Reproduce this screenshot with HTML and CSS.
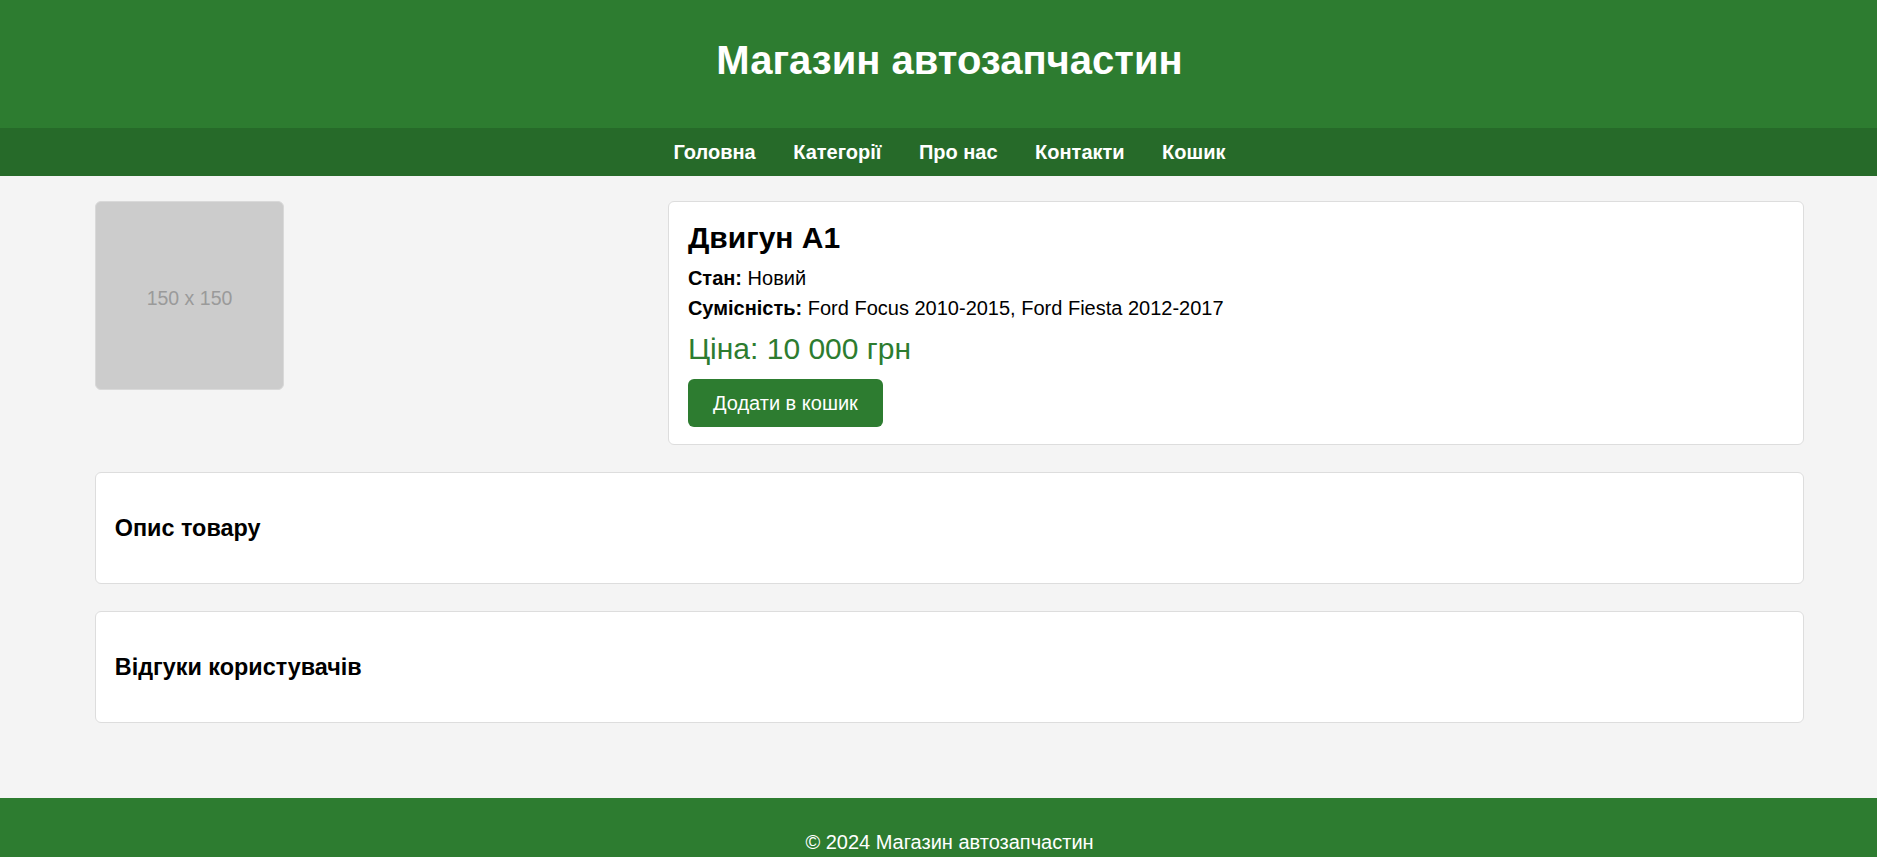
FILE: index.html
```html
<!DOCTYPE html>
<html lang="uk">
<head>
<meta charset="utf-8">
<title>Магазин автозапчастин</title>
<link rel="stylesheet" href="styles.css">
</head>
<body>
<header class="site-header">
  <h1 class="site-title">Магазин автозапчастин</h1>
</header>
<nav class="site-nav">
  <a href="#" class="nav-link">Головна</a>
  <a href="#" class="nav-link">Категорії</a>
  <a href="#" class="nav-link">Про нас</a>
  <a href="#" class="nav-link">Контакти</a>
  <a href="#" class="nav-link">Кошик</a>
</nav>
<main class="page">
  <section class="product">
    <div class="product-image">
      <div class="placeholder">150 x 150</div>
    </div>
    <div class="product-info card">
      <h2 class="product-title">Двигун А1</h2>
      <p class="product-meta"><strong>Стан:</strong> Новий</p>
      <p class="product-meta"><strong>Сумісність:</strong> Ford Focus 2010-2015, Ford Fiesta 2012-2017</p>
      <p class="product-price">Ціна: 10 000 грн</p>
      <button class="btn-cart" type="button">Додати в кошик</button>
    </div>
  </section>
  <section class="card section-card">
    <h3 class="section-title">Опис товару</h3>
  </section>
  <section class="card section-card">
    <h3 class="section-title">Відгуки користувачів</h3>
  </section>
</main>
<footer class="site-footer">
  <p class="footer-text">© 2024 Магазин автозапчастин</p>
</footer>
</body>
</html>
```

FILE: styles.css
```css
html, body {
  margin: 0;
  padding: 0;
}

body {
  background: #f4f4f4;
  color: #000;
  font-family: "Liberation Sans", Arial, sans-serif;
  font-size: 20px;
}

.site-header {
  background: #2d7c30;
  color: #fff;
  text-align: center;
  padding: 37px 0 45px 22px;
}

.site-title {
  margin: 0;
  font-size: 40px;
  line-height: 46px;
  font-weight: bold;
}

.site-nav {
  background: #266a29;
  display: flex;
  justify-content: center;
  padding: 12.5px 0 12.5px 22px;
}

.nav-link {
  color: #fff;
  text-decoration: none;
  font-weight: bold;
  font-size: 20px;
  line-height: 23px;
  margin: 0 18.75px;
}

.page {
  display: flex;
  flex-direction: column;
  gap: 27px;
  padding: 25px 73px 75px 95px;
}

.card {
  background: #fff;
  border: 1px solid #ddd;
  border-radius: 6px;
}

.product {
  display: flex;
  align-items: flex-start;
}

.product-image {
  flex: 1;
  margin-right: 25px;
}

.placeholder {
  box-sizing: border-box;
  width: 189px;
  height: 189px;
  padding-top: 5px;
  background: #cccccc;
  border: 1px solid #d9d9d9;
  border-radius: 6px;
  color: #9a9a9a;
  font-size: 19.5px;
  display: flex;
  align-items: center;
  justify-content: center;
}

.product-info {
  flex: 2;
  padding: 19px 18.75px 17px;
}

.product-title {
  margin: 0 0 12px;
  font-size: 30px;
  line-height: 34px;
  font-weight: bold;
}

.product-meta {
  margin: 0 0 7px;
  font-size: 20px;
  line-height: 23px;
}

.product-price {
  margin: 12px 0 13px;
  font-size: 30px;
  line-height: 34px;
  color: #2d7c30;
}

.btn-cart {
  display: block;
  background: #2d7c30;
  color: #fff;
  border: none;
  border-radius: 6px;
  padding: 12.5px 25px;
  font-family: "Liberation Sans", Arial, sans-serif;
  font-size: 20px;
  line-height: 23px;
  cursor: pointer;
}

.section-card {
  padding: 19px 18.75px;
}

.section-title {
  margin: 24px 0 23px;
  font-size: 23.4px;
  line-height: 25px;
  font-weight: bold;
}

.site-footer {
  background: #2d7c30;
  color: #fff;
  text-align: center;
  padding: 12.5px 0 12.5px 22px;
}

.footer-text {
  margin: 20px 0;
  font-size: 20px;
  line-height: 23px;
}
```
